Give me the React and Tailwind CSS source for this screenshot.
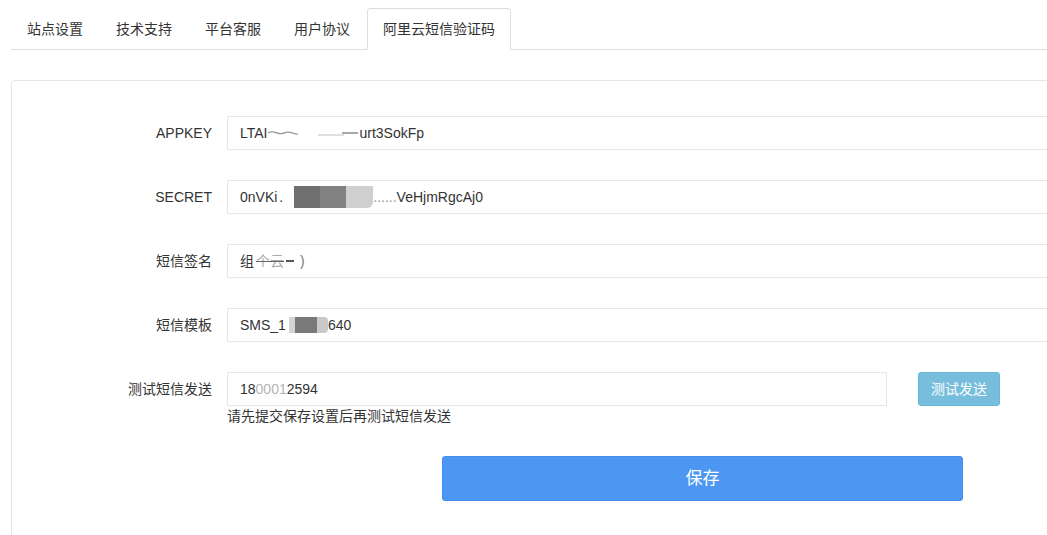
import React from 'react'

const tabs = ['站点设置', '技术支持', '平台客服', '用户协议', '阿里云短信验证码']

function Field({ label, children, last }) {
  return (
    <div className={`flex items-center ${last ? '' : 'mb-[30px]'}`}>
      <label className="w-[200px] shrink-0 text-right text-[14px] text-[#333]">
        {label}
      </label>
      <div className="ml-[15px] flex h-[34px] w-[860px] shrink-0 items-center whitespace-nowrap border border-[#e5e6e7] bg-white pl-[12px] text-[14px] text-[#333]">
        {children}
      </div>
    </div>
  )
}

export default function App() {
  return (
    <div
      className="h-[535px] w-full overflow-hidden bg-white pt-[8px]"
      style={{ fontFamily: '"Liberation Sans", "Noto Sans CJK SC", sans-serif' }}
    >
      {/* tabs */}
      <ul className="ml-[11px] flex w-[1100px] border-b border-[#ddd]">
        {tabs.map((t, i) => {
          const active = i === tabs.length - 1
          return (
            <li key={t} className="-mb-px mr-[1px]">
              <a
                className={`block rounded-t-[4px] border px-[15px] py-[10px] text-[14px] leading-[20px] text-[#333] ${
                  active ? 'border-[#ddd] border-b-white bg-white' : 'border-transparent'
                }`}
              >
                {t}
              </a>
            </li>
          )
        })}
      </ul>

      {/* panel */}
      <div className="ml-[11px] mt-[30px] h-[500px] w-[1100px] rounded-tl-[4px] border-l border-t border-[#e6e6e6] pt-[35px]">
        <Field label="APPKEY">
          <span>LTAI</span>
          <span className="relative inline-block h-[20px] w-[92px]">
            <svg width="92" height="20" className="absolute left-0 top-0">
              <path d="M0 10 C6 6 10 13 16 10 S26 12 30 11" stroke="#9a9a9a" strokeWidth="1.4" fill="none" />
              <path d="M50 12 L76 12" stroke="#d6d6d6" strokeWidth="1.5" />
              <path d="M74 10 L90 10" stroke="#777" strokeWidth="1.3" />
            </svg>
          </span>
          <span>urt3SokFp</span>
        </Field>

        <Field label="SECRET">
          <span>0nVKi</span>
          <span className="ml-[2px]">.</span>
          <span className="ml-[11px] flex h-[22px] items-center">
            <span className="h-[22px] w-[26px] bg-[#6f6f6f]" />
            <span className="h-[22px] w-[26px] bg-[#818181]" />
            <span className="h-[22px] w-[27px] rounded-br-[6px] bg-[#cfcfcf]" />
          </span>
          <span className="text-[#999]">......</span>
          <span>VeHjmRgcAj0</span>
        </Field>

        <Field label="短信签名">
          <span>组</span>
          <span className="ml-[2px] text-[#aaa] line-through decoration-[#666]">个云</span>
          <span className="ml-[2px] inline-block h-[2px] w-[8px] bg-[#555]" />
          <span className="ml-[6px] text-[#777]">)</span>
        </Field>

        <Field label="短信模板">
          <span>SMS_1</span>
          <span className="ml-[3px] flex h-[16px] items-center">
            <span className="h-[16px] w-[6px] bg-[#d4d4d4]" />
            <span className="h-[16px] w-[22px] bg-[#797979]" />
            <span className="h-[16px] w-[11px] rounded-r-[4px] bg-[#c9c9c9]" />
          </span>
          <span>640</span>
        </Field>

        {/* test send row */}
        <div className="flex items-start">
          <label className="flex h-[34px] w-[200px] shrink-0 items-center justify-end text-[14px] text-[#333]">
            测试短信发送
          </label>
          <div className="ml-[15px] w-[660px] shrink-0">
            <div className="flex h-[34px] items-center whitespace-nowrap border border-[#e5e6e7] bg-white pl-[12px] text-[14px] text-[#333]">
              <span>18</span>
              <span className="text-[#b5b5b5]">0001</span>
              <span>2594</span>
            </div>
            <p className="text-[14px] leading-[20px] text-[#333]">请先提交保存设置后再测试短信发送</p>
          </div>
          <button className="ml-[31px] h-[34px] w-[82px] rounded-[3px] border border-[#6ab6d6] bg-[#76bedc] text-[14px] text-white">
            测试发送
          </button>
        </div>

        <div className="mt-[30px] pl-[430px]">
          <button className="h-[45px] w-[521px] rounded-[3px] border border-[#418ef0] bg-[#4d97f3] text-[17px] text-white">
            保存
          </button>
        </div>
      </div>
    </div>
  )
}
